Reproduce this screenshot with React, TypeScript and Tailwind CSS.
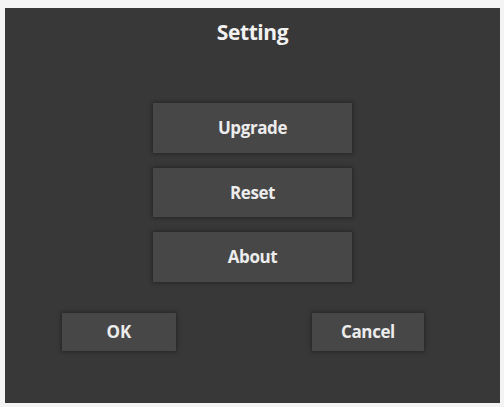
import React from "react";

const font = { fontFamily: '"Open Sans", "Noto Sans", sans-serif' };

function Btn({ label, cls }: { label: string; cls: string }) {
  return (
    <div
      className={`flex items-center justify-center bg-[#474747] text-[#ececec] font-bold shadow-[0_0_4px_1px_rgba(0,0,0,0.35)] ${cls}`}
    >
      {label}
    </div>
  );
}

export default function App() {
  return (
    <div className="w-[504px] h-[407px] bg-[#f4f4f4] pl-[5px] pt-[8px]" style={font}>
      <div className="w-[495px] h-[395px] bg-[#383838] flex flex-col">
        <div className="h-[50px] flex items-center justify-center text-[21px] font-bold text-[#f2f2f2] tracking-[-0.4px]">
          Setting
        </div>
        <div className="mt-[45px] flex flex-col items-center gap-[15px]">
          <Btn label="Upgrade" cls="w-[199px] h-[50px] text-[17px] tracking-[-0.4px]" />
          <Btn label="Reset" cls="w-[199px] h-[49px] text-[17px] tracking-[-0.4px]" />
          <Btn label="About" cls="w-[199px] h-[50px] text-[17px] tracking-[-0.4px]" />
        </div>
        <div className="mt-[31px] flex">
          <Btn label="OK" cls="ml-[57px] w-[114px] h-[38px] text-[17px]" />
          <Btn label="Cancel" cls="ml-[136px] w-[112px] h-[38px] text-[17px] tracking-[-0.4px]" />
        </div>
      </div>
    </div>
  );
}
